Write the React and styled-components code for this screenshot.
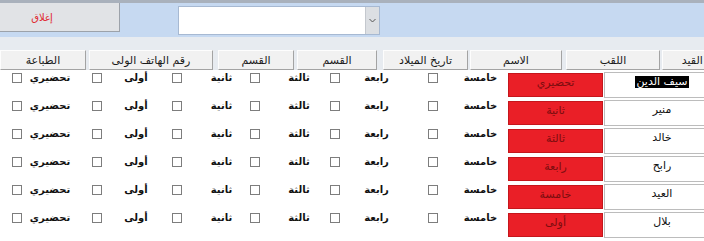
import React from "react";
import styled, { createGlobalStyle } from "styled-components";

const Global = createGlobalStyle`
  html, body { margin: 0; padding: 0; background: #ffffff; }
  body { font-family: "DejaVu Sans", sans-serif; }
`;

const Page = styled.div`
  width: 704px;
  height: 241px;
  overflow: hidden;
  background: #ffffff;
`;

const TopBar = styled.div`
  height: 34px;
  border-top: 3px solid #a9b1bc;
  background: #c6d9f1;
  display: flex;
  align-items: flex-start;
`;

const CloseButton = styled.button`
  width: 120px;
  height: 29px;
  margin: 0;
  padding: 0 35px 0 0;
  box-sizing: border-box;
  background: #e1e3e6;
  border: none;
  border-right: 1px solid #9ca2aa;
  border-bottom: 1px solid #9ca2aa;
  display: flex;
  align-items: center;
  justify-content: center;
  color: #e0262e;
  font-family: "DejaVu Sans", sans-serif;
  font-size: 10px;
`;

const Combo = styled.div`
  margin: 3px 0 0 58px;
  width: 202px;
  height: 29px;
  box-sizing: border-box;
  border: 1px solid #a7b9d2;
  background: #ffffff;
  display: flex;
  justify-content: flex-end;
`;

const ComboArrow = styled.div`
  width: 13px;
  height: 100%;
  background: #dcdfe3;
  border-left: 1px solid #c4c8ce;
  display: flex;
  align-items: center;
  justify-content: center;
`;

const HeaderStrip = styled.div`
  height: 33px;
  box-sizing: border-box;
  padding-top: 13px;
  background: #e7ebf0;
  display: flex;
  white-space: nowrap;
`;

const HeaderCell = styled.div`
  flex: none;
  width: ${(p) => p.$w}px;
  margin-right: ${(p) => p.$gap || 0}px;
  height: 20px;
  box-sizing: border-box;
  background: #f1f1f1;
  border-top: 1px solid #fdfdfd;
  border-left: 1px solid #fdfdfd;
  border-right: 1px solid #a3a3a3;
  border-bottom: 1px solid #a3a3a3;
  display: flex;
  align-items: center;
  justify-content: center;
  font-size: 11px;
  color: #1b1b1b;
`;

const Row = styled.div`
  display: grid;
  grid-template-columns: 34px 32px 62px 16px 66px 23px 44px 44px 28px 55px 58px 37px 9px 95px 1px 116px;
  height: 28px;
  white-space: nowrap;
`;

const CheckCell = styled.div`
  display: flex;
  justify-content: center;
  align-items: flex-start;
  padding-top: 3px;
`;

const Box = styled.span`
  display: block;
  width: 10px;
  height: 10px;
  box-sizing: border-box;
  border: 1px solid #7d7d7d;
  background: #ffffff;
`;

const LabelCell = styled.div`
  display: flex;
  justify-content: center;
  align-items: flex-start;
  padding-top: 2px;
  font-size: 10px;
  line-height: 11px;
  font-weight: bold;
  letter-spacing: -0.3px;
  color: #111111;
`;

const GradeCell = styled.div`
  margin-top: 3px;
  height: 24px;
  box-sizing: border-box;
  background: #ea1f27;
  border: 1px solid #c5161c;
  display: flex;
  justify-content: center;
  align-items: flex-start;
  padding-top: 3px;
  font-size: 11px;
  line-height: 12px;
  color: #7c0d0f;
`;

const Spacer = styled.div``;

const NameCell = styled.div`
  margin-top: 2px;
  height: 26px;
  box-sizing: border-box;
  background: #ffffff;
  border: 1px solid #bcbcbc;
  display: flex;
  justify-content: center;
  align-items: flex-start;
  padding-top: 3px;
  font-size: 11px;
  line-height: 12px;
  color: #111111;
`;

const Selected = styled.span`
  background: #000000;
  color: #ffffff;
  padding: 0 1px;
`;

const headers = [
  { t: "الطباعة", w: 86, g: 3 },
  { t: "رقم الهاتف الولى", w: 124, g: 5 },
  { t: "القسم", w: 76, g: 3 },
  { t: "القسم", w: 80, g: 6 },
  { t: "تاريخ الميلاد", w: 85, g: 2 },
  { t: "الاسم", w: 92, g: 4 },
  { t: "اللقب", w: 94, g: 2 },
  { t: "رقم القيد", w: 82, g: 0 },
];

const rows = [
  { name: "سيف الدين", grade: "تحضيري", selected: true },
  { name: "منير", grade: "ثانية" },
  { name: "خالد", grade: "ثالثة" },
  { name: "رابح", grade: "رابعة" },
  { name: "العيد", grade: "خامسة" },
  { name: "بلال", grade: "أولى" },
];

const labels = ["تحضيري", "أولى", "ثانية", "ثالثة", "رابعة", "خامسة"];

export default function App() {
  return (
    <Page>
      <Global />
      <TopBar>
        <CloseButton>إغلاق</CloseButton>
        <Combo>
          <ComboArrow>
            <svg width="7" height="5" viewBox="0 0 7 5">
              <path d="M0.5 1 L3.5 4 L6.5 1" fill="none" stroke="#555" strokeWidth="1" />
            </svg>
          </ComboArrow>
        </Combo>
      </TopBar>
      <HeaderStrip>
        {headers.map((h, i) => (
          <HeaderCell key={i} $w={h.w} $gap={h.g}>
            {h.t}
          </HeaderCell>
        ))}
      </HeaderStrip>
      {rows.map((r, i) => (
        <Row key={i}>
          {labels.map((l) => (
            <React.Fragment key={l}>
              <CheckCell>
                <Box />
              </CheckCell>
              <LabelCell>{l}</LabelCell>
            </React.Fragment>
          ))}
          <Spacer />
          <GradeCell>{r.grade}</GradeCell>
          <Spacer />
          <NameCell>{r.selected ? <Selected>{r.name}</Selected> : r.name}</NameCell>
        </Row>
      ))}
    </Page>
  );
}
